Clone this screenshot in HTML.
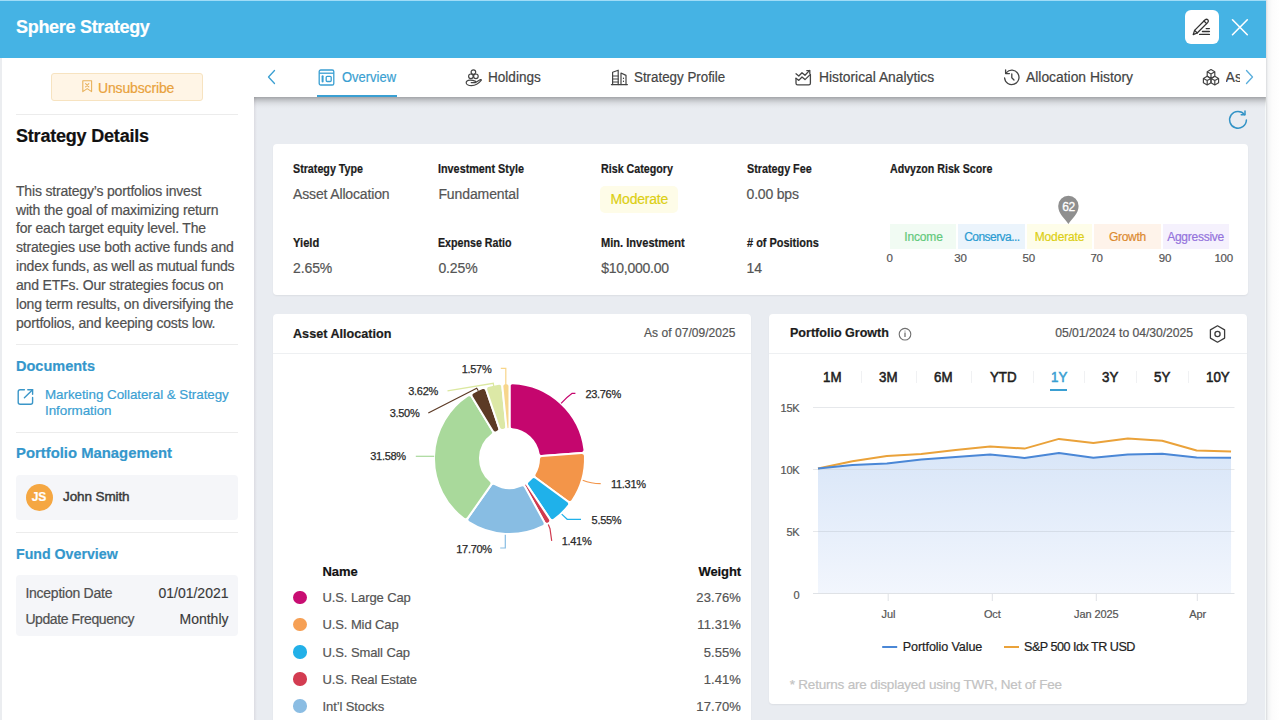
<!DOCTYPE html>
<html><head><meta charset="utf-8">
<style>
*{box-sizing:border-box;margin:0;padding:0}
html,body{width:1280px;height:720px;overflow:hidden;background:#fff;font-family:"Liberation Sans",sans-serif;position:relative}
.t{position:absolute;white-space:nowrap;line-height:1;z-index:3;-webkit-text-stroke-width:0.2px}
svg{z-index:3}
</style></head><body>
<div style="position:absolute;left:1266px;top:0px;width:14px;height:720px;background:linear-gradient(90deg,#d9dbde 0,#f3f4f5 2px,#fcfcfc 6px,#fff 100%)"></div>
<div style="position:absolute;left:0px;top:0px;width:1266px;height:58px;background:#45b3e4"></div>
<div style="position:absolute;left:0px;top:0px;width:1266px;height:1px;background:#9fdcf7"></div>
<div style="position:absolute;left:0px;top:58px;width:254px;height:662px;background:#fff"></div>
<div style="position:absolute;left:0px;top:58px;width:2px;height:662px;background:#ebedf0"></div>
<div style="position:absolute;left:254px;top:97px;width:1012px;height:623px;background:#e9ecf1"></div>
<div style="position:absolute;left:1265px;top:58px;width:1px;height:662px;background:#f6f9f9"></div>
<div style="position:absolute;left:254px;top:97px;width:3px;height:623px;background:linear-gradient(90deg,#dcdce2,#e9ecf1)"></div>
<div style="position:absolute;left:254px;top:58px;width:1012px;height:39px;background:#fff;z-index:1"></div>
<div style="position:absolute;left:254px;top:97px;width:1012px;height:12px;background:linear-gradient(rgba(0,0,0,.30) 0,rgba(0,0,0,.17) 3px,rgba(0,0,0,.07) 6px,rgba(0,0,0,.02) 9px,rgba(0,0,0,0) 12px);z-index:1"></div>
<div class="t" style="left:16px;top:18.16px;font-size:18px;font-weight:700;color:#fff;letter-spacing:-0.3px;">Sphere Strategy</div>
<div style="position:absolute;left:1184.5px;top:10px;width:34px;height:34px;background:#fff;border-radius:6px"></div>
<svg style="position:absolute;left:1184px;top:10px" width="34" height="34" viewBox="0 0 34 34" fill="none"><g stroke="#333" stroke-width="1.3" stroke-linecap="round" stroke-linejoin="round"><path d="M9.2 24.6 L10.6 20.4 L21.2 9.8 Q22.6 8.6 23.8 9.8 Q25 11 23.8 12.4 L13.2 23 Z"/><path d="M10.6 20.4 L13.2 23"/><path d="M20 11 L22.6 13.6"/><path d="M15.6 24.4 H25.4"/><path d="M18.4 21.5 H25.4"/><path d="M22.2 18.6 H25.4"/></g></svg>
<svg style="position:absolute;left:1230px;top:17px" width="20" height="20" viewBox="0 0 20 20" fill="none"><g stroke="#fff" stroke-width="1.6" stroke-linecap="round"><path d="M2.5 2.8 L17.3 17.7"/><path d="M17.3 2.8 L2.5 17.7"/></g></svg>
<div style="position:absolute;left:51px;top:73px;width:152px;height:28px;background:#fff5e6;border:1px solid #f7e3c0;border-radius:3px"></div>
<svg style="position:absolute;left:80px;top:79px" width="14" height="14" viewBox="0 0 14 14" fill="none"><g stroke="#e8b25c" stroke-width="1.1" stroke-linejoin="round" stroke-linecap="round"><path d="M2.8 1.8 H11.6 V12.6 L7.2 9.6 L2.8 12.6 Z"/><path d="M5.6 4.6 L8.8 7.8 M8.8 4.6 L5.6 7.8"/></g></svg>
<div class="t" style="left:98px;top:80.65px;font-size:14px;font-weight:400;color:#e9a23c;letter-spacing:-0.15px;">Unsubscribe</div>
<div style="position:absolute;left:16px;top:113.5px;width:222px;height:1px;background:#ececec"></div>
<div class="t" style="left:16px;top:126.76px;font-size:18px;font-weight:700;color:#111;letter-spacing:-0.2px;">Strategy Details</div>
<div class="t" style="left:16px;top:183.75px;font-size:14px;font-weight:400;color:#505050;letter-spacing:-0.18px;">This strategy’s portfolios invest</div>
<div class="t" style="left:16px;top:202.59px;font-size:14px;font-weight:400;color:#505050;letter-spacing:-0.18px;">with the goal of maximizing return</div>
<div class="t" style="left:16px;top:221.43px;font-size:14px;font-weight:400;color:#505050;letter-spacing:-0.18px;">for each target equity level. The</div>
<div class="t" style="left:16px;top:240.27px;font-size:14px;font-weight:400;color:#505050;letter-spacing:-0.18px;">strategies use both active funds and</div>
<div class="t" style="left:16px;top:259.11px;font-size:14px;font-weight:400;color:#505050;letter-spacing:-0.18px;">index funds, as well as mutual funds</div>
<div class="t" style="left:16px;top:277.95px;font-size:14px;font-weight:400;color:#505050;letter-spacing:-0.18px;">and ETFs. Our strategies focus on</div>
<div class="t" style="left:16px;top:296.79px;font-size:14px;font-weight:400;color:#505050;letter-spacing:-0.18px;">long term results, on diversifying the</div>
<div class="t" style="left:16px;top:315.63px;font-size:14px;font-weight:400;color:#505050;letter-spacing:-0.18px;">portfolios, and keeping costs low.</div>
<div style="position:absolute;left:16px;top:344.3px;width:222px;height:1px;background:#ececec"></div>
<div class="t" style="left:16px;top:358.08px;font-size:15.5px;font-weight:700;color:#3497cc;transform:scaleX(0.936);transform-origin:0 50%;">Documents</div>
<svg style="position:absolute;left:16px;top:387px" width="19" height="19" viewBox="0 0 19 19" fill="none"><g stroke="#3a96c8" stroke-width="1.4" stroke-linecap="round" stroke-linejoin="round"><path d="M8.4 2.7 H4.2 Q2.2 2.7 2.2 4.7 V15.2 Q2.2 17.2 4.2 17.2 H14.6 Q16.6 17.2 16.6 15.2 V10.4"/><path d="M11.8 2.7 H16.6 V7.2"/><path d="M16.6 2.7 L8.4 10.7"/></g></svg>
<div class="t" style="left:45px;top:388.46px;font-size:13.4px;font-weight:400;color:#3b9fd3;letter-spacing:-0.05px;">Marketing Collateral &amp; Strategy</div>
<div class="t" style="left:45px;top:404.46px;font-size:13.4px;font-weight:400;color:#3b9fd3;letter-spacing:-0.05px;">Information</div>
<div style="position:absolute;left:16px;top:431.5px;width:222px;height:1px;background:#ececec"></div>
<div class="t" style="left:16px;top:445.28px;font-size:15.5px;font-weight:700;color:#3497cc;transform:scaleX(0.958);transform-origin:0 50%;">Portfolio Management</div>
<div style="position:absolute;left:16px;top:475px;width:222px;height:45px;background:#f5f6f9;border-radius:4px"></div>
<div style="position:absolute;left:25.5px;top:483.7px;width:27px;height:27px;background:#f5a742;border-radius:50%"></div>
<div class="t" style="left:39px;top:491.34px;font-size:12px;font-weight:700;color:#fff;transform:translateX(-50%);transform-origin:50% 50%;">JS</div>
<div class="t" style="left:63px;top:490.27px;font-size:13.5px;font-weight:400;color:#3a3a3a;letter-spacing:-0.1px;-webkit-text-stroke:0.45px #3a3a3a;">John Smith</div>
<div style="position:absolute;left:16px;top:532.3px;width:222px;height:1px;background:#ececec"></div>
<div class="t" style="left:16px;top:546.38px;font-size:15.5px;font-weight:700;color:#3497cc;transform:scaleX(0.915);transform-origin:0 50%;">Fund Overview</div>
<div style="position:absolute;left:16px;top:575px;width:222px;height:61px;background:#f5f6f9;border-radius:4px"></div>
<div class="t" style="left:25.4px;top:585.75px;font-size:14px;font-weight:400;color:#505050;letter-spacing:-0.25px;">Inception Date</div>
<div class="t" style="left:25.4px;top:611.75px;font-size:14px;font-weight:400;color:#505050;letter-spacing:-0.4px;">Update Frequency</div>
<div class="t" style="left:228.5px;top:585.75px;font-size:14px;font-weight:400;color:#3a3a3a;transform:translateX(-100%);transform-origin:100% 50%;-webkit-text-stroke:0.15px #3a3a3a;">01/01/2021</div>
<div class="t" style="left:228.5px;top:611.75px;font-size:14px;font-weight:400;color:#3a3a3a;transform:translateX(-100%);transform-origin:100% 50%;-webkit-text-stroke:0.15px #3a3a3a;">Monthly</div>
<svg style="position:absolute;left:264px;top:68px" width="14" height="18" viewBox="0 0 14 18" fill="none"><path d="M10.5 2.5 L4.5 9 L10.5 15.5" stroke="#3a9fd2" stroke-width="1.3" stroke-linecap="round" stroke-linejoin="round"/></svg>
<svg style="position:absolute;left:1242px;top:68px" width="14" height="18" viewBox="0 0 14 18" fill="none"><path d="M4.5 2.5 L10.5 9 L4.5 15.5" stroke="#5aaedc" stroke-width="1.3" stroke-linecap="round" stroke-linejoin="round"/></svg>
<svg style="position:absolute;left:318px;top:69px" width="17" height="17" viewBox="0 0 17 17" fill="none"><g stroke="#3a9fd2" stroke-width="1.3" stroke-linejoin="round"><rect x="1.2" y="1" width="14.6" height="15" rx="1.6"/><path d="M1.2 4.2 H15.8"/><rect x="8.2" y="7.3" width="5" height="5.2" rx="1"/></g><path d="M4.6 7.2 V12.6" stroke="#3a9fd2" stroke-width="2" stroke-linecap="round"/></svg>
<div class="t" style="left:341.5px;top:69.95px;font-size:14px;font-weight:400;color:#3a9fd2;transform:scaleX(0.927);transform-origin:0 50%;">Overview</div>
<div style="position:absolute;left:316.5px;top:95px;width:80px;height:2px;background:#3a9fd2;z-index:2"></div>
<svg style="position:absolute;left:464px;top:68px" width="19" height="19" viewBox="0 0 19 19" fill="none"><g stroke="#444" stroke-width="1.2" stroke-linecap="round" stroke-linejoin="round"><circle cx="9.4" cy="4.1" r="2.3"/><circle cx="6.9" cy="8.3" r="2.3"/><circle cx="11.9" cy="8.3" r="2.3"/><path d="M11.6 13.4 Q9 12.2 6 12.2 Q2 12.2 2.2 15 Q2.6 17.6 7.6 17.6 Q13 17.6 17.2 12.4 Q17.8 11.2 16.4 11.6 L11.6 14.6 H7.2"/></g></svg>
<div class="t" style="left:488.4px;top:69.95px;font-size:14px;font-weight:400;color:#444;transform:scaleX(0.969);transform-origin:0 50%;">Holdings</div>
<svg style="position:absolute;left:610px;top:68px" width="19" height="19" viewBox="0 0 19 19" fill="none"><g stroke="#444" stroke-width="1.2" stroke-linejoin="round" stroke-linecap="round"><path d="M2.6 16.6 V4.2 L8.2 2.2 V16.6"/><path d="M11 16.6 V5 L16 7.4 V16.6"/><path d="M1.4 16.6 H17.4"/><path d="M2.6 8 H8.2 M2.6 11 H8.2 M2.6 14 H8.2"/><path d="M13.5 10 V10.4 M13.5 13 V13.4"/></g></svg>
<div class="t" style="left:633.75px;top:69.95px;font-size:14px;font-weight:400;color:#444;transform:scaleX(0.953);transform-origin:0 50%;">Strategy Profile</div>
<svg style="position:absolute;left:794px;top:68px" width="19" height="19" viewBox="0 0 19 19" fill="none"><g stroke="#444" stroke-width="1.3" stroke-linecap="round" stroke-linejoin="round"><path d="M2 10.5 V15.2 Q2 16.8 3.6 16.8 H14.8 Q16.4 16.8 16.4 15.2 V6.6"/><path d="M2 10.2 L4.8 12.4 L8 9 L11 11.6 L16.4 6.4"/><path d="M2 5.8 L4.8 8 L8 4.8 L11 7.2 L15.6 2.4"/><path d="M12.8 2.6 H15.8 V5.4"/></g></svg>
<div class="t" style="left:818.6px;top:69.95px;font-size:14px;font-weight:400;color:#444;transform:scaleX(0.987);transform-origin:0 50%;">Historical Analytics</div>
<svg style="position:absolute;left:1002px;top:68px" width="19" height="19" viewBox="0 0 19 19" fill="none"><g stroke="#444" stroke-width="1.3" stroke-linecap="round" stroke-linejoin="round"><path d="M4.4 4.6 A7.2 7.2 0 1 1 2.6 10"/><path d="M3.6 1.8 V5.6 H7.4"/><path d="M9.8 6 V9.8 L12 12"/></g></svg>
<div class="t" style="left:1026.4px;top:69.95px;font-size:14px;font-weight:400;color:#444;transform:scaleX(0.989);transform-origin:0 50%;">Allocation History</div>
<svg style="position:absolute;left:1201px;top:68px" width="20" height="19" viewBox="0 0 20 19" fill="none"><g stroke="#444" stroke-width="1.2" stroke-linejoin="round"><path d="M10 1.6 L13.8 3.8 V8.2 L10 10.4 L6.2 8.2 V3.8 Z M6.2 3.8 L10 6 L13.8 3.8 M10 6 V10.4"/><path d="M6.2 8.2 L10 10.4 V14.8 L6.2 17 L2.4 14.8 V10.4 Z M2.4 10.4 L6.2 12.6 L10 10.4 M6.2 12.6 V17"/><path d="M13.8 8.2 L17.6 10.4 V14.8 L13.8 17 L10 14.8 V10.4 Z M10 10.4 L13.8 12.6 L17.6 10.4 M13.8 12.6 V17"/></g></svg>
<div style="position:absolute;left:1225.6px;top:60px;width:14px;height:36px;overflow:hidden;z-index:3"><div class="t" style="left:0;top:9.85px;font-size:14px;color:#444">As</div></div>
<svg style="position:absolute;left:1226px;top:108px" width="24" height="24" viewBox="0 0 24 24" fill="none"><g stroke="#3393c6" stroke-width="1.5" stroke-linecap="round" stroke-linejoin="round"><path d="M18.6 6.6 A8.4 8.4 0 1 0 20.4 12"/><path d="M19 3 V6.8 H15.2"/></g></svg>
<div style="position:absolute;left:273px;top:144px;width:975px;height:150.5px;background:#fff;border-radius:4px;box-shadow:0 1px 2px rgba(0,0,0,.06);z-index:2"></div>
<div class="t" style="left:293px;top:163.44px;font-size:12px;font-weight:700;color:#1c1c1c;transform:scaleX(0.892);transform-origin:0 50%;">Strategy Type</div>
<div class="t" style="left:293px;top:187.35px;font-size:14px;font-weight:400;color:#555;letter-spacing:-0.15px;">Asset Allocation</div>
<div class="t" style="left:438.4px;top:163.44px;font-size:12px;font-weight:700;color:#1c1c1c;transform:scaleX(0.901);transform-origin:0 50%;">Investment Style</div>
<div class="t" style="left:438.4px;top:187.35px;font-size:14px;font-weight:400;color:#555;letter-spacing:-0.1px;">Fundamental</div>
<div class="t" style="left:601.2px;top:163.44px;font-size:12px;font-weight:700;color:#1c1c1c;transform:scaleX(0.892);transform-origin:0 50%;">Risk Category</div>
<div style="position:absolute;left:600.3px;top:186px;width:78px;height:26.5px;background:#fefce8;border-radius:5px;z-index:2"></div>
<div class="t" style="left:610.6px;top:191.95px;font-size:14px;font-weight:400;color:#dccf14;letter-spacing:-0.2px;">Moderate</div>
<div class="t" style="left:746.6px;top:163.44px;font-size:12px;font-weight:700;color:#1c1c1c;transform:scaleX(0.898);transform-origin:0 50%;">Strategy Fee</div>
<div class="t" style="left:746.6px;top:187.35px;font-size:14px;font-weight:400;color:#555;letter-spacing:-0.2px;">0.00 bps</div>
<div class="t" style="left:438.4px;top:237.14px;font-size:12px;font-weight:700;color:#1c1c1c;transform:scaleX(0.889);transform-origin:0 50%;">Expense Ratio</div>
<div class="t" style="left:438.4px;top:260.65px;font-size:14px;font-weight:400;color:#555;letter-spacing:-0.1px;">0.25%</div>
<div class="t" style="left:293px;top:237.14px;font-size:12px;font-weight:700;color:#1c1c1c;transform:scaleX(0.93);transform-origin:0 50%;">Yield</div>
<div class="t" style="left:293px;top:260.65px;font-size:14px;font-weight:400;color:#555;letter-spacing:-0.1px;">2.65%</div>
<div class="t" style="left:601.2px;top:237.14px;font-size:12px;font-weight:700;color:#1c1c1c;transform:scaleX(0.923);transform-origin:0 50%;">Min. Investment</div>
<div class="t" style="left:601.2px;top:260.65px;font-size:14px;font-weight:400;color:#555;letter-spacing:-0.25px;">$10,000.00</div>
<div class="t" style="left:746.6px;top:237.14px;font-size:12px;font-weight:700;color:#1c1c1c;transform:scaleX(0.912);transform-origin:0 50%;"># of Positions</div>
<div class="t" style="left:746.6px;top:260.65px;font-size:14px;font-weight:400;color:#555;letter-spacing:-0.1px;">14</div>
<div class="t" style="left:890px;top:163.44px;font-size:12px;font-weight:700;color:#1c1c1c;transform:scaleX(0.887);transform-origin:0 50%;">Advyzon Risk Score</div>
<div style="position:absolute;left:890px;top:224.3px;width:66px;height:24.8px;background:#f1fbf3;z-index:2"></div>
<div class="t" style="left:923.5px;top:231.34px;font-size:12px;font-weight:400;color:#62c97b;letter-spacing:-0.18px;transform:translateX(-50%);transform-origin:50% 50%;">Income</div>
<div style="position:absolute;left:958.3px;top:224.3px;width:66.7px;height:24.8px;background:#ebf4fc;z-index:2"></div>
<div class="t" style="left:991.9px;top:231.34px;font-size:12px;font-weight:400;color:#2a9bd2;letter-spacing:-0.55px;transform:translateX(-50%);transform-origin:50% 50%;">Conserva...</div>
<div style="position:absolute;left:1027.3px;top:224.3px;width:64.7px;height:24.8px;background:#fefde9;z-index:2"></div>
<div class="t" style="left:1059.5px;top:231.34px;font-size:12px;font-weight:400;color:#dccf14;letter-spacing:-0.15px;transform:translateX(-50%);transform-origin:50% 50%;">Moderate</div>
<div style="position:absolute;left:1094.4px;top:224.3px;width:66.6px;height:24.8px;background:#fef3ea;z-index:2"></div>
<div class="t" style="left:1127.4px;top:231.34px;font-size:12px;font-weight:400;color:#dc8a30;letter-spacing:-0.3px;transform:translateX(-50%);transform-origin:50% 50%;">Growth</div>
<div style="position:absolute;left:1162.7px;top:224.3px;width:66.3px;height:24.8px;background:#f5f1fd;z-index:2"></div>
<div class="t" style="left:1195.6px;top:231.34px;font-size:12px;font-weight:400;color:#9473dc;letter-spacing:-0.26px;transform:translateX(-50%);transform-origin:50% 50%;">Aggressive</div>
<div class="t" style="left:886.4px;top:253.07px;font-size:11.5px;font-weight:400;color:#555;letter-spacing:-0.2px;">0</div>
<div class="t" style="left:954.3px;top:253.07px;font-size:11.5px;font-weight:400;color:#555;letter-spacing:-0.2px;">30</div>
<div class="t" style="left:1022.6px;top:253.07px;font-size:11.5px;font-weight:400;color:#555;letter-spacing:-0.2px;">50</div>
<div class="t" style="left:1090.4px;top:253.07px;font-size:11.5px;font-weight:400;color:#555;letter-spacing:-0.2px;">70</div>
<div class="t" style="left:1158.7px;top:253.07px;font-size:11.5px;font-weight:400;color:#555;letter-spacing:-0.2px;">90</div>
<div class="t" style="left:1214.4px;top:253.07px;font-size:11.5px;font-weight:400;color:#555;letter-spacing:-0.2px;">100</div>
<svg style="position:absolute;left:1056px;top:194px" width="25" height="32" viewBox="0 0 25 32" fill="none"><path d="M12.4 30 C 9 24.5, 2.2 20, 2.2 12 A10.2 10.2 0 0 1 22.6 12 C 22.6 20, 15.8 24.5, 12.4 30 Z" fill="#8f8f8f"/></svg>
<div class="t" style="left:1068.6px;top:200.94px;font-size:12px;font-weight:400;color:#fff;letter-spacing:-0.4px;transform:translateX(-50%);transform-origin:50% 50%;-webkit-text-stroke:0.3px #fff;">62</div>
<div style="position:absolute;left:273px;top:314px;width:477.5px;height:420px;background:#fff;border-radius:4px;box-shadow:0 1px 2px rgba(0,0,0,.06);z-index:2"></div>
<div style="position:absolute;left:273px;top:353px;width:477.5px;height:1px;background:#eef0f2;z-index:2"></div>
<div class="t" style="left:293.1px;top:326.83px;font-size:13.2px;font-weight:700;color:#1c1c1c;transform:scaleX(0.957);transform-origin:0 50%;">Asset Allocation</div>
<div class="t" style="left:735.5px;top:327.24px;font-size:12px;font-weight:400;color:#555;letter-spacing:0.05px;transform:translateX(-100%);transform-origin:100% 50%;">As of 07/09/2025</div>
<div style="position:absolute;left:769.4px;top:314px;width:478px;height:389.5px;background:#fff;border-radius:4px;box-shadow:0 1px 2px rgba(0,0,0,.06);z-index:2"></div>
<div style="position:absolute;left:769.4px;top:353px;width:478px;height:1px;background:#eef0f2;z-index:2"></div>
<div class="t" style="left:789.6px;top:326.33px;font-size:13.2px;font-weight:700;color:#1c1c1c;transform:scaleX(0.951);transform-origin:0 50%;">Portfolio Growth</div>
<svg style="position:absolute;left:897px;top:325.5px" width="16" height="16" viewBox="0 0 16 16" fill="none"><circle cx="8" cy="8.2" r="5.8" stroke="#707070" stroke-width="1.1"/><path d="M8 6.4 V11" stroke="#707070" stroke-width="1.3"/><circle cx="8" cy="5" r="0.6" fill="#707070"/></svg>
<div class="t" style="left:1193px;top:327.17px;font-size:12.2px;font-weight:400;color:#555;letter-spacing:-0.05px;transform:translateX(-100%);transform-origin:100% 50%;">05/01/2024 to 04/30/2025</div>
<svg style="position:absolute;left:1208px;top:324px" width="20" height="20" viewBox="0 0 20 20" fill="none"><path d="M9.5 1.8 L16.6 5.9 V14.1 L9.5 18.2 L2.4 14.1 V5.9 Z" stroke="#3c3c3c" stroke-width="1.3" stroke-linejoin="round"/><circle cx="9.5" cy="10" r="2.6" stroke="#3c3c3c" stroke-width="1.3"/></svg>
<div class="t" style="left:823.4px;top:370.15px;font-size:14px;font-weight:400;color:#1e1e1e;transform:scaleX(0.95);transform-origin:0 50%;-webkit-text-stroke:0.55px #1e1e1e;">1M</div>
<div class="t" style="left:878.5px;top:370.15px;font-size:14px;font-weight:400;color:#1e1e1e;transform:scaleX(0.95);transform-origin:0 50%;-webkit-text-stroke:0.55px #1e1e1e;">3M</div>
<div class="t" style="left:933.75px;top:370.15px;font-size:14px;font-weight:400;color:#1e1e1e;transform:scaleX(0.95);transform-origin:0 50%;-webkit-text-stroke:0.55px #1e1e1e;">6M</div>
<div class="t" style="left:989.5px;top:370.15px;font-size:14px;font-weight:400;color:#1e1e1e;transform:scaleX(0.95);transform-origin:0 50%;-webkit-text-stroke:0.55px #1e1e1e;">YTD</div>
<div class="t" style="left:1050.5px;top:370.15px;font-size:14px;font-weight:400;color:#3a9fd2;transform:scaleX(0.95);transform-origin:0 50%;-webkit-text-stroke:0.55px #3a9fd2;">1Y</div>
<div class="t" style="left:1102px;top:370.15px;font-size:14px;font-weight:400;color:#1e1e1e;transform:scaleX(0.95);transform-origin:0 50%;-webkit-text-stroke:0.55px #1e1e1e;">3Y</div>
<div class="t" style="left:1153.75px;top:370.15px;font-size:14px;font-weight:400;color:#1e1e1e;transform:scaleX(0.95);transform-origin:0 50%;-webkit-text-stroke:0.55px #1e1e1e;">5Y</div>
<div class="t" style="left:1206.25px;top:370.15px;font-size:14px;font-weight:400;color:#1e1e1e;transform:scaleX(0.95);transform-origin:0 50%;-webkit-text-stroke:0.55px #1e1e1e;">10Y</div>
<div style="position:absolute;left:860.6px;top:371px;width:1px;height:12px;background:#f0f1f3;z-index:2"></div>
<div style="position:absolute;left:916.1px;top:371px;width:1px;height:12px;background:#f0f1f3;z-index:2"></div>
<div style="position:absolute;left:971.25px;top:371px;width:1px;height:12px;background:#f0f1f3;z-index:2"></div>
<div style="position:absolute;left:1032.5px;top:371px;width:1px;height:12px;background:#f0f1f3;z-index:2"></div>
<div style="position:absolute;left:1083.75px;top:371px;width:1px;height:12px;background:#f0f1f3;z-index:2"></div>
<div style="position:absolute;left:1136.25px;top:371px;width:1px;height:12px;background:#f0f1f3;z-index:2"></div>
<div style="position:absolute;left:1187.5px;top:371px;width:1px;height:12px;background:#f0f1f3;z-index:2"></div>
<div style="position:absolute;left:1050px;top:389.2px;width:16.5px;height:2px;background:#3a9fd2;z-index:2"></div>
<svg style="position:absolute;left:0;top:0;z-index:3" width="1280" height="720" viewBox="0 0 1280 720"><path d="M512.62 383.16 A75.5 75.5 0 0 1 584.46 449.61 A3.00 3.00 0 0 1 581.72 452.96 L541.76 456.08 A3.00 3.00 0 0 1 538.57 453.60 A29.5 29.5 0 0 0 512.22 429.23 A3.00 3.00 0 0 1 509.50 426.24 L509.50 386.16 A3.00 3.00 0 0 1 512.62 383.16 Z" fill="#c5066e" stroke="#fff" stroke-width="2" stroke-linejoin="round"/><path d="M584.95 455.84 A75.5 75.5 0 0 1 572.18 500.69 A3.00 3.00 0 0 1 567.92 501.44 L535.60 477.74 A3.00 3.00 0 0 1 534.80 473.77 A29.5 29.5 0 0 0 539.00 459.03 A3.00 3.00 0 0 1 541.76 456.08 L581.72 452.96 A3.00 3.00 0 0 1 584.95 455.84 Z" fill="#f39549" stroke="#fff" stroke-width="2" stroke-linejoin="round"/><path d="M568.49 505.73 A75.5 75.5 0 0 1 554.03 519.57 A3.00 3.00 0 0 1 549.76 518.82 L527.49 485.50 A3.00 3.00 0 0 1 528.09 481.50 A29.5 29.5 0 0 0 531.58 478.17 A3.00 3.00 0 0 1 535.60 477.74 L567.92 501.44 A3.00 3.00 0 0 1 568.49 505.73 Z" fill="#1fb1ea" stroke="#fff" stroke-width="2" stroke-linejoin="round"/><path d="M548.83 523.05 A75.5 75.5 0 0 1 548.46 523.27 A3.00 3.00 0 0 1 544.28 522.14 L524.30 485.65 A1.37 1.37 0 0 1 524.80 483.83 A29.5 29.5 0 0 0 524.80 483.83 A1.37 1.37 0 0 1 526.64 484.23 L549.76 518.82 A3.00 3.00 0 0 1 548.83 523.05 Z" fill="#d03a4f" stroke="#fff" stroke-width="2" stroke-linejoin="round"/><path d="M542.98 526.27 A75.5 75.5 0 0 1 468.76 522.17 A3.00 3.00 0 0 1 467.92 517.92 L490.93 485.10 A3.00 3.00 0 0 1 494.87 484.22 A29.5 29.5 0 0 0 521.21 485.67 A3.00 3.00 0 0 1 525.04 486.99 L544.28 522.14 A3.00 3.00 0 0 1 542.98 526.27 Z" fill="#88bde3" stroke="#fff" stroke-width="2" stroke-linejoin="round"/><path d="M463.64 518.58 A75.5 75.5 0 0 1 467.66 395.75 A3.00 3.00 0 0 1 471.88 396.69 L492.70 430.94 A3.00 3.00 0 0 1 491.92 434.91 A29.5 29.5 0 0 0 490.41 481.09 A3.00 3.00 0 0 1 490.93 485.10 L467.92 517.92 A3.00 3.00 0 0 1 463.64 518.58 Z" fill="#a9d99b" stroke="#fff" stroke-width="2" stroke-linejoin="round"/><path d="M473.00 392.51 A75.5 75.5 0 0 1 482.37 388.14 A3.00 3.00 0 0 1 486.29 389.98 L499.13 427.94 A3.00 3.00 0 0 1 497.51 431.65 A29.5 29.5 0 0 0 496.57 432.08 A3.00 3.00 0 0 1 492.70 430.94 L471.88 396.69 A3.00 3.00 0 0 1 473.00 392.51 Z" fill="#5c3a25" stroke="#fff" stroke-width="2" stroke-linejoin="round"/><path d="M488.29 386.14 A75.5 75.5 0 0 1 498.96 383.84 A3.00 3.00 0 0 1 502.37 386.51 L506.31 426.40 A3.00 3.00 0 0 1 503.90 429.64 A29.5 29.5 0 0 0 502.67 429.90 A3.00 3.00 0 0 1 499.13 427.94 L486.29 389.98 A3.00 3.00 0 0 1 488.29 386.14 Z" fill="#dce8a6" stroke="#fff" stroke-width="2" stroke-linejoin="round"/><path d="M505.18 383.22 A75.5 75.5 0 0 1 506.38 383.16 A3.00 3.00 0 0 1 509.50 386.16 L509.50 427.61 A1.53 1.53 0 0 1 508.05 429.14 A29.5 29.5 0 0 0 508.05 429.14 A1.53 1.53 0 0 1 506.45 427.76 L502.37 386.51 A3.00 3.00 0 0 1 505.18 383.22 Z" fill="#f7d68c" stroke="#fff" stroke-width="2" stroke-linejoin="round"/><path d="M561.1 403.3 Q567 397 572.2 393.3 L575.4 393.3" stroke="#c5066e" stroke-width="1.2" fill="none"/><path d="M582.7 480.3 Q591 483.7 600.7 483.7" stroke="#f39549" stroke-width="1.2" fill="none"/><path d="M561.7 514.1 L567.2 519.3 L581 519.3" stroke="#1fb1ea" stroke-width="1.2" fill="none"/><path d="M548.3 524.5 L550 528.75 L551.7 540.8" stroke="#d03a4f" stroke-width="1.2" fill="none"/><path d="M505.3 534.8 L505.3 548 L500.2 548" stroke="#88bde3" stroke-width="1.2" fill="none"/><path d="M434.2 456.3 L415.8 456.3" stroke="#a9d99b" stroke-width="1.2" fill="none"/><path d="M478.3 390.8 L476.7 388.3 L428.3 413" stroke="#5c3a25" stroke-width="1.2" fill="none"/><path d="M493.8 386.7 L493.3 383.3 L447.5 390.8" stroke="#dbe8a0" stroke-width="1.2" fill="none"/><path d="M505.8 385.8 L505.8 368.3 L500.8 368.3" stroke="#f8d58a" stroke-width="1.2" fill="none"/></svg>
<div class="t" style="left:585.4px;top:388.59px;font-size:11px;font-weight:400;color:#2a2a2a;letter-spacing:-0.3px;-webkit-text-stroke:0.25px #2a2a2a;">23.76%</div>
<div class="t" style="left:611px;top:478.69px;font-size:11px;font-weight:400;color:#2a2a2a;letter-spacing:-0.3px;-webkit-text-stroke:0.25px #2a2a2a;">11.31%</div>
<div class="t" style="left:591.6px;top:514.79px;font-size:11px;font-weight:400;color:#2a2a2a;letter-spacing:-0.3px;-webkit-text-stroke:0.25px #2a2a2a;">5.55%</div>
<div class="t" style="left:561.7px;top:536.19px;font-size:11px;font-weight:400;color:#2a2a2a;letter-spacing:-0.3px;-webkit-text-stroke:0.25px #2a2a2a;">1.41%</div>
<div class="t" style="left:456.3px;top:543.99px;font-size:11px;font-weight:400;color:#2a2a2a;letter-spacing:-0.3px;-webkit-text-stroke:0.25px #2a2a2a;">17.70%</div>
<div class="t" style="left:370.3px;top:451.49px;font-size:11px;font-weight:400;color:#2a2a2a;letter-spacing:-0.3px;-webkit-text-stroke:0.25px #2a2a2a;">31.58%</div>
<div class="t" style="left:389.7px;top:407.69px;font-size:11px;font-weight:400;color:#2a2a2a;letter-spacing:-0.3px;-webkit-text-stroke:0.25px #2a2a2a;">3.50%</div>
<div class="t" style="left:408.3px;top:386.49px;font-size:11px;font-weight:400;color:#2a2a2a;letter-spacing:-0.3px;-webkit-text-stroke:0.25px #2a2a2a;">3.62%</div>
<div class="t" style="left:461.7px;top:363.99px;font-size:11px;font-weight:400;color:#2a2a2a;letter-spacing:-0.3px;-webkit-text-stroke:0.25px #2a2a2a;">1.57%</div>
<div class="t" style="left:322.5px;top:564.60px;font-size:13px;font-weight:700;color:#111;letter-spacing:-0.1px;">Name</div>
<div class="t" style="left:741px;top:564.60px;font-size:13px;font-weight:700;color:#111;letter-spacing:-0.1px;transform:translateX(-100%);transform-origin:100% 50%;">Weight</div>
<div style="position:absolute;left:293.2px;top:590.85px;width:13.4px;height:13.4px;background:#c80d72;border-radius:50%;z-index:2"></div>
<div class="t" style="left:322.5px;top:591.25px;font-size:13px;font-weight:400;color:#555;letter-spacing:-0.1px;">U.S. Large Cap</div>
<div class="t" style="left:741px;top:591.25px;font-size:13px;font-weight:400;color:#555;letter-spacing:0.1px;transform:translateX(-100%);transform-origin:100% 50%;">23.76%</div>
<div style="position:absolute;left:293.2px;top:618.0px;width:13.4px;height:13.4px;background:#f6a055;border-radius:50%;z-index:2"></div>
<div class="t" style="left:322.5px;top:618.40px;font-size:13px;font-weight:400;color:#555;letter-spacing:-0.1px;">U.S. Mid Cap</div>
<div class="t" style="left:741px;top:618.40px;font-size:13px;font-weight:400;color:#555;letter-spacing:0.1px;transform:translateX(-100%);transform-origin:100% 50%;">11.31%</div>
<div style="position:absolute;left:293.2px;top:645.15px;width:13.4px;height:13.4px;background:#22b0e8;border-radius:50%;z-index:2"></div>
<div class="t" style="left:322.5px;top:645.55px;font-size:13px;font-weight:400;color:#555;letter-spacing:-0.1px;">U.S. Small Cap</div>
<div class="t" style="left:741px;top:645.55px;font-size:13px;font-weight:400;color:#555;letter-spacing:0.1px;transform:translateX(-100%);transform-origin:100% 50%;">5.55%</div>
<div style="position:absolute;left:293.2px;top:672.3000000000001px;width:13.4px;height:13.4px;background:#d33c51;border-radius:50%;z-index:2"></div>
<div class="t" style="left:322.5px;top:672.70px;font-size:13px;font-weight:400;color:#555;letter-spacing:-0.1px;">U.S. Real Estate</div>
<div class="t" style="left:741px;top:672.70px;font-size:13px;font-weight:400;color:#555;letter-spacing:0.1px;transform:translateX(-100%);transform-origin:100% 50%;">1.41%</div>
<div style="position:absolute;left:293.2px;top:699.45px;width:13.4px;height:13.4px;background:#8bbde3;border-radius:50%;z-index:2"></div>
<div class="t" style="left:322.5px;top:699.85px;font-size:13px;font-weight:400;color:#555;letter-spacing:-0.1px;">Int’l Stocks</div>
<div class="t" style="left:741px;top:699.85px;font-size:13px;font-weight:400;color:#555;letter-spacing:0.1px;transform:translateX(-100%);transform-origin:100% 50%;">17.70%</div>
<svg style="position:absolute;left:0;top:0;z-index:3" width="1280" height="720" viewBox="0 0 1280 720"><defs><linearGradient id="af" x1="0" y1="0" x2="0" y2="1"><stop offset="0" stop-color="#d9e6f8"/><stop offset="1" stop-color="#f2f6fd"/></linearGradient></defs><path d="M813 407.5 H1234.5" stroke="#e6e8eb" stroke-width="1"/><path d="M813 469.5 H1234.5" stroke="#e6e8eb" stroke-width="1"/><path d="M813 531.5 H1234.5" stroke="#e6e8eb" stroke-width="1"/><path d="M818.00 468.6 L852.42 465 L886.84 463.5 L921.26 459.5 L955.68 457 L990.10 454.4 L1024.52 458 L1058.94 452.9 L1093.36 457.7 L1127.78 454.5 L1162.20 453.8 L1196.62 457.4 L1231.04 457.7 L1231.04 593 L818.0 593 Z" fill="url(#af)"/><path d="M818 469.5 H1231" stroke="#d5dde8" stroke-width="1"/><path d="M818 531.5 H1231" stroke="#d5dde8" stroke-width="1"/><path d="M813 593.5 H1234.5" stroke="#dfe2e6" stroke-width="1"/><path d="M888.2 593.5 V601" stroke="#dfe2e6" stroke-width="1"/><path d="M992.3 593.5 V601" stroke="#dfe2e6" stroke-width="1"/><path d="M1096.3 593.5 V601" stroke="#dfe2e6" stroke-width="1"/><path d="M1197.3 593.5 V601" stroke="#dfe2e6" stroke-width="1"/><path d="M818.00 468.6 L852.42 461.3 L886.84 456 L921.26 453.9 L955.68 450 L990.10 446.6 L1024.52 448.6 L1058.94 438.9 L1093.36 443 L1127.78 438.5 L1162.20 440.7 L1196.62 450.5 L1231.04 451.6" stroke="#eaa23a" stroke-width="2" fill="none" stroke-linejoin="round"/><path d="M818.00 468.6 L852.42 465 L886.84 463.5 L921.26 459.5 L955.68 457 L990.10 454.4 L1024.52 458 L1058.94 452.9 L1093.36 457.7 L1127.78 454.5 L1162.20 453.8 L1196.62 457.4 L1231.04 457.7" stroke="#4a87d6" stroke-width="2" fill="none" stroke-linejoin="round"/><path d="M882.2 647 H897.2" stroke="#4a87d6" stroke-width="2"/><path d="M1004 647 H1019" stroke="#eaa23a" stroke-width="2"/></svg>
<div class="t" style="left:799.5px;top:402.59px;font-size:11px;font-weight:400;color:#555;letter-spacing:-0.2px;transform:translateX(-100%);transform-origin:100% 50%;">15K</div>
<div class="t" style="left:799.5px;top:464.59px;font-size:11px;font-weight:400;color:#555;letter-spacing:-0.2px;transform:translateX(-100%);transform-origin:100% 50%;">10K</div>
<div class="t" style="left:799.5px;top:526.59px;font-size:11px;font-weight:400;color:#555;letter-spacing:-0.2px;transform:translateX(-100%);transform-origin:100% 50%;">5K</div>
<div class="t" style="left:799.5px;top:589.59px;font-size:11px;font-weight:400;color:#555;letter-spacing:-0.2px;transform:translateX(-100%);transform-origin:100% 50%;">0</div>
<div class="t" style="left:888.4px;top:609.19px;font-size:11px;font-weight:400;color:#555;letter-spacing:-0.1px;transform:translateX(-50%);transform-origin:50% 50%;">Jul</div>
<div class="t" style="left:992.3px;top:609.19px;font-size:11px;font-weight:400;color:#555;letter-spacing:-0.1px;transform:translateX(-50%);transform-origin:50% 50%;">Oct</div>
<div class="t" style="left:1096.3px;top:609.19px;font-size:11px;font-weight:400;color:#555;letter-spacing:-0.1px;transform:translateX(-50%);transform-origin:50% 50%;">Jan 2025</div>
<div class="t" style="left:1197.6px;top:609.19px;font-size:11px;font-weight:400;color:#555;letter-spacing:-0.1px;transform:translateX(-50%);transform-origin:50% 50%;">Apr</div>
<div class="t" style="left:902.8px;top:640.63px;font-size:12.6px;font-weight:400;color:#222;letter-spacing:-0.1px;">Portfolio Value</div>
<div class="t" style="left:1024px;top:640.63px;font-size:12.6px;font-weight:400;color:#222;letter-spacing:-0.5px;">S&amp;P 500 Idx TR USD</div>
<div class="t" style="left:789.7px;top:678.32px;font-size:13.5px;font-weight:400;color:#c2c2c2;letter-spacing:-0.2px;">* Returns are displayed using TWR, Net of Fee</div>
</body></html>
